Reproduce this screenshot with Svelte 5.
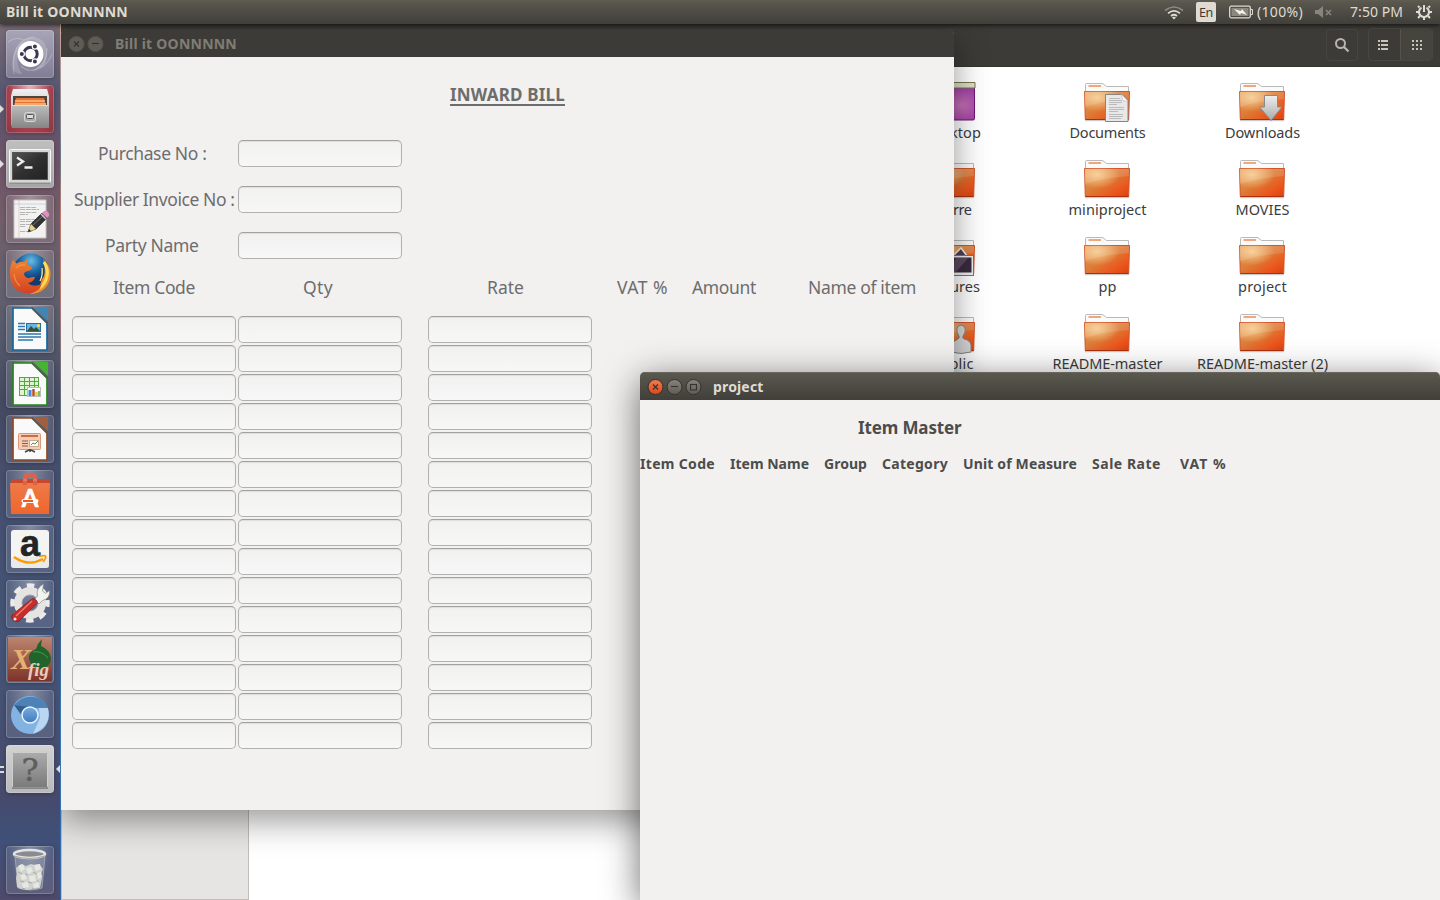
<script>
  // Tracks a label so that it occupies the given width.
  function fit(node, width) {
    const apply = () => {
      node.style.letterSpacing = '0px';
      const natural = node.getBoundingClientRect().width;
      const count = node.textContent.length;
      node.style.letterSpacing = `${(width - natural) / count}px`;
    };
    apply();
    document.fonts?.ready.then(apply);
  }

  const launchers = [
    'dash', 'files', 'terminal', 'editor', 'firefox', 'writer', 'calc', 'impress',
    'software', 'amazon', 'settings', 'xfig', 'chromium', 'unknown'
  ];
  const folders = [
    ['Desktop', 57, 'desktop'], ['Documents', 76, 'documents'], ['Downloads', 75, 'downloads'],
    ['Pierre', 38, ''], ['miniproject', 78, ''], ['MOVIES', 54, ''],
    ['Pictures', 55, 'pictures'], ['pp', 18, ''], ['project', 49, ''],
    ['Public', 42, 'public'], ['README-master', 110, ''], ['README-master (2)', 131, '']
  ];
  const fields = [['Purchase No :', 108.5], ['Supplier Invoice No :', 160.5], ['Party Name', 93.5]];
  const heads = [['Item Code', 82], ['Qty', 30], ['Rate', 37], ['VAT %', 51], ['Amount', 64], ['Name of item', 108]];
  const master = [['Item Code', 75], ['Item Name', 79], ['Group', 43], ['Category', 66], ['Unit of Measure', 114], ['Sale Rate', 69], ['VAT %', 46.5]];
  const rows = Array.from({ length: 15 });
</script>

{#snippet launcherIcon(kind)}
  <svg width="48" height="48" viewBox="0 0 48 48">
    {#if kind === 'dash'}
      <path d="M7 40C5 24 10 9 27 7Q42 8 41 27 39 41 25 41 33 38 38 30 40 14 27 10 12 12 11 28 11 36 16 44 10 44 7 40z" fill="#fff" fill-opacity=".17" />
      <path d="M8 44C5 24 12 8 28 7M15 36C25 46 41 38 41 18M2 12Q10 6 18 10M34 38Q42 34 46 24" fill="none" stroke="#fff" stroke-opacity=".22" stroke-width="1.200" />
      <circle cx="24.500" cy="24" r="13" fill="#fff" />
      <circle cx="24.500" cy="24" r="6.700" fill="none" stroke="#3c3750" stroke-width="3" />
      <g fill="#3c3750" stroke="#fff" stroke-width="1.200"><circle cx="15.800" cy="24" r="2.600" /><circle cx="28.900" cy="16.500" r="2.600" /><circle cx="28.900" cy="31.500" r="2.600" /></g>
    {:else if kind === 'files'}
      <path d="M7 4h34l2 7v28l-1 4H6l-1-4V11z" fill="url(#metal)" />
      <path d="M7 11h34v10H7z" fill="#4c443d" />
      <path d="M10 13h28l2 7H8z" fill="#e2713a" /><path d="M9 16h30M9 19h31" stroke="#f9c078" stroke-width="1.5" />
      <path d="M6 20h37v23H6z" fill="url(#drawer)" /><path d="M6 20.5h37" stroke="#ddd" />
      <rect x="18.5" y="27.5" width="11" height="9" rx="2" fill="#aaa" stroke="#d8d8d8" /><rect x="20.5" y="29.5" width="7" height="4" rx="1" fill="#ddd" stroke="#555" />
    {:else if kind === 'terminal'}
      <rect x="3.5" y="9.5" width="41" height="33" rx="1" fill="#d5d5d5" stroke="#f8f8f8" />
      <path d="M4 43h40" stroke="#777" stroke-width="1" />
      <rect x="6.5" y="12.5" width="35" height="27" fill="url(#screen)" stroke="#555" />
      <path d="M11 17.500l6 4-6 4M18.500 27.500h8" fill="none" stroke="#eee" stroke-width="2.300" />
    {:else if kind === 'editor'}
      <path d="M8 5h32v38H8z" fill="#f2f2f0" stroke="#c4c2c0" />
      <path d="M13 5v38" stroke="#e6b7b7" stroke-width=".6" /><path d="M8 9h32" stroke="#a7c3dc" stroke-width=".6" />
      <path d="M14 12.500h16M14 14.500h19M14 17.500h17M14 19.500h8M14 24.500h18M14 26.500h14M14 29.500h17M14 31.500h6M14 36.500h12" stroke="#b4b4b4" stroke-dasharray="5 .7" />
      <path d="M22 37l3-8 11-11 5 5-11 11z" fill="#333" stroke="#111" stroke-width=".6" /><path d="M27 30l11-10" stroke="#777" />
      <path d="M22 37l3-8 5 5z" fill="#e9d38a" /><path d="M22 37l1-3 2 2z" fill="#222" />
      <path d="M36 18l2-2q2-1 4 1t1 4l-2 2z" fill="#e58bc4" /><path d="M35 19l5 5" stroke="#ccc" stroke-width="1.5" />
    {:else if kind === 'firefox'}
      <circle cx="25" cy="22" r="18.500" fill="url(#ffblue)" />
      <path d="M37 9q8 7 7.500 16C44 37 35 44 24 44q10-5 12-15l2-3q2-9-1-17z" fill="#f0902c" />
      <path d="M38 12q5 8 2.500 16-1.500 6-7 10" fill="none" stroke="#fddd55" stroke-width="3" />
      <path d="M36 18q1 7-2 13" fill="none" stroke="#fff0a0" stroke-width="1.200" />
      <path d="M7 10l3.500 3.500q4-2.500 7.500-1.500 1-2 4-2.500-1.500 4 0 5.500 3 1 4 2.500-.5 2.500-4 3.500-4 1-4 3 1 4 5 4 3-1.500 6-1-1 5-7 6 5 5 14 1-3 8-12 9.500C11 44 4 35 4 25Q3.500 16 7 10z" fill="url(#fffox)" />
      <path d="M10 18q4-4 9-3M8 24q1 8 6 12" fill="none" stroke="#f6a04b" stroke-opacity=".7" stroke-width="1.300" />
    {:else if kind === 'writer' || kind === 'calc' || kind === 'impress'}
      {@const c = kind === 'writer' ? '#176799' : kind === 'calc' ? '#238519' : '#8d4a25'}
      {@const c2 = kind === 'writer' ? '#3e86b4' : kind === 'calc' ? '#43b52e' : '#a35f3b'}
      <path d="M7 3h19l15 15v27H7z" fill="#fafafa" stroke={c} stroke-width="1.700" />
      <path d="M28 2h14v14z" fill={c2} /><path d="M26 2.500L41.500 18" stroke="#555" stroke-opacity=".6" stroke-width="2.500" />
      {#if kind === 'writer'}
        <path d="M12 18.500h7M12 21.500h7M12 24.500h7M12 29h23M12 32h23M12 35h15" stroke="#2b7bad" stroke-width="1.4" />
        <rect x="20.500" y="18.500" width="14" height="8" fill="#68b5e4" stroke="#28719d" /><path d="M21 26l4-5 3 3 2-2 4 4z" fill="#34513d" /><circle cx="32.500" cy="20.500" r="1.500" fill="#f5e93f" />
      {:else if kind === 'calc'}
        <rect x="13.500" y="17.500" width="19" height="18" fill="#e0f4d4" stroke="#52a742" /><path d="M13 21.500h20M13 25.500h20M13 29.500h20M18.500 18v17M23.500 18v17M28.500 18v17" stroke="#52a742" />
        <rect x="21.500" y="27.500" width="13" height="9" fill="#fff" stroke="#bbb" /><path d="M24 30v6" stroke="#3c8bd9" stroke-width="3" /><path d="M27.500 29v7" stroke="#bd4d2a" stroke-width="2.500" /><path d="M30.500 32v4" stroke="#edc53c" stroke-width="2.500" /><path d="M33 31v5" stroke="#78c35d" stroke-width="2" />
      {:else}
        <rect x="12.500" y="18.500" width="22" height="16" rx="1" fill="#f5cdb4" stroke="#dd977a" /><path d="M15 21h17" stroke="#c66d49" stroke-width="2" />
        <path d="M16 26h6M16 28.500h6M16 31h6" stroke="#91583d" /><rect x="23.500" y="25.500" width="9" height="6" fill="#fff" stroke="#ccaa92" /><path d="M25 30l2-2 2 1 3-3" fill="none" stroke="#3f9e3c" />
        <path d="M19 37l4-2h2l4 2M24 34v3" fill="none" stroke="#444" stroke-width="1.500" />
      {/if}
    {:else if kind === 'software'}
      <path d="M5 10l2-1h34l2 1v6H5z" fill="#c7482e" /><path d="M4 13h40l-1 31H5z" fill="url(#bag)" />
      <path d="M19 15V8q0-3 3-3h4q3 0 3 3v7" fill="none" stroke="#d96449" stroke-width="4" /><path d="M17 10h4M27 10h4" stroke="#ed8d70" />
      <text x="24" y="37" text-anchor="middle" font-family="Lato, sans-serif" font-weight="700" font-size="24" fill="#fff" stroke="#fff" stroke-width=".6">A</text>
      <rect x="15.500" y="29" width="17" height="4" rx="2" fill="#fff" /><path d="M17 31h10" stroke="#ec5a22" stroke-width="2" />
    {:else if kind === 'amazon'}
      <rect x="5" y="5" width="38" height="38" rx="3" fill="#f4f4f3" /><rect x="5" y="32" width="38" height="11" rx="2" fill="#dfdfdf" fill-opacity=".5" />
      <text x="24" y="31" text-anchor="middle" font-family="Liberation Sans, sans-serif" font-weight="700" font-size="36" fill="#242424" stroke="#242424" stroke-width=".6">a</text>
      <path d="M8 32q14 10 29 2" fill="none" stroke="#ff9900" stroke-width="2.200" /><path d="M33 31.500q5-1.500 6.500-.500 1 2-2.500 6" fill="none" stroke="#ff9900" stroke-width="1.800" />
    {:else if kind === 'settings'}
      <circle cx="24" cy="23" r="17" fill="none" stroke="#ecebea" stroke-width="5.500" stroke-dasharray="7.300 6.050" stroke-dashoffset="3.600" />
      <circle cx="24" cy="23" r="12" fill="none" stroke="#e5e4e2" stroke-width="8" /><circle cx="24" cy="23" r="8" fill="none" stroke="#a2a2a4" />
      <path d="M28 20l3.500-4q-2-8 6-12l-1 7 3 2.500 4-3q1 8-7 10l-3.500 3.500z" fill="#f2f2ef" stroke="#888" stroke-width=".7" />
      <path d="M26.500 18.500q4 0 5 4.500L13 41q-3 2-6-1t0-6z" fill="#c92d2b" stroke="#701c1e" stroke-width=".7" /><path d="M10 36l16-15" stroke="#ec8176" stroke-width="1.300" /><circle cx="9" cy="39" r="1.500" fill="#eee" />
    {:else if kind === 'xfig'}
      <rect x="2" y="2" width="44" height="44" fill="url(#rust)" />
      <path d="M23 24q-1-7 7-10l2-5 4-5-1 7q9 4 10 12 0 9-10 11-10 0-12-10z" fill="#20642c" /><path d="M27 17q8-2 15 6" stroke="#4b9a4a" fill="none" />
      <text font-family="Liberation Serif, serif" font-style="italic" font-weight="700" fill="#e5b071"><tspan x="5" y="34" font-size="30">X</tspan><tspan x="22" y="41" font-size="19" fill="#efc8bd">fig</tspan></text>
    {:else if kind === 'chromium'}
      <circle cx="24" cy="25" r="19" fill="#82b3e3" /><path d="M8 15Q17 5 28 7q10 1 14 11H24z" fill="#4e82b7" /><path d="M42 18q4 18-15 26l7-16-1-10z" fill="#bbd6f0" /><path d="M8 15l11 15-2-9 7-4z" fill="#315e8c" />
      <circle cx="24" cy="25" r="8" fill="url(#chrome)" stroke="#e9f3fb" stroke-width="1.500" />
    {:else if kind === 'unknown'}
      <rect x="6.500" y="7.500" width="35" height="35" rx="1" fill="url(#grey)" stroke="#cfcfcf" /><path d="M6 43h36" stroke="#555" />
      <text x="24" y="36" text-anchor="middle" font-family="DejaVu Serif, serif" font-size="32" fill="#5e5e5e" stroke="#5e5e5e" stroke-width=".5">?</text>
    {:else}
      <path d="M9 10h30l-3 32q-12 4-24 0z" fill="#cdd2dc" fill-opacity=".25" stroke="#bcc1cc" stroke-opacity=".6" />
      <path d="M10 22l5-4 5 2 5-2 4 1 4-1 4 5-2 5 1 4-2 10-6 1-6 1-7-1-4-2-1-9 1-4z" fill="#d0d2ce" />
      <g fill="#e6e8e4"><path d="M12 20l5-2 2 5-4 3zM20 22l5-1 2 5-5 2zM28 19l6-1 1 5-5 2zM14 29l5-1 2 5-5 1zM23 30l6-1 1 6-6 1zM31 27l4-1 1 5-4 2zM16 37l6-1 1 5-6 1zM27 38l6-2v5l-5 1z" /></g>
      <path d="M12 26l4 2M19 28l3 1M27 26l4 2M14 35l4 1M22 36l4 1M31 34l2 2M16 42l3 1M26 42l2 1" stroke="#a8aaa9" />
      <ellipse cx="23.500" cy="8" rx="15.500" ry="4" fill="#888b92" stroke="#e3e3df" stroke-width="2.500" /><path d="M8 10q15 5 31 0" fill="none" stroke="#a4a49f" />
    {/if}
  </svg>
{/snippet}

{#snippet circle(kind, tone)}
  <svg class="wbtn" width="19" height="18" viewBox="0 0 19 18">
    <circle cx="9.500" cy="9" r="7.500" fill={tone === 'hot' ? 'url(#hot)' : tone === 'on' ? 'url(#cool)' : '#5e5c55'} stroke={tone === 'off' ? '#55534d' : '#34322e'} />
    <g fill="none" stroke="#34332f" stroke-width="1.100">
      {#if kind === 'close'}<path d="M7 6.500l5 5M12 6.500l-5 5" />{:else if kind === 'min'}<path d="M6 8.500h7" />{:else}<rect x="6.500" y="6.500" width="6" height="5.500" />{/if}
    </g>
  </svg>
{/snippet}

<svg class="defs" width="0" height="0">
  <defs>
    <linearGradient id="metal" x2="0" y2="1"><stop stop-color="#f2f2f2" /><stop offset="1" stop-color="#999" /></linearGradient>
    <linearGradient id="drawer" x2="0" y2="1"><stop stop-color="#bdbdbd" /><stop offset="1" stop-color="#858585" /></linearGradient>
    <linearGradient id="screen" x2="1" y2="1"><stop stop-color="#555" /><stop offset=".5" stop-color="#303030" /><stop offset="1" stop-color="#222" /></linearGradient>
    <radialGradient id="ffblue" cx=".5" cy=".2"><stop stop-color="#69bee4" /><stop offset=".6" stop-color="#1d65a4" /><stop offset="1" stop-color="#133b72" /></radialGradient>
    <linearGradient id="fffox" x2="0" y2="1"><stop stop-color="#ee8433" /><stop offset="1" stop-color="#d44122" /></linearGradient>
    <linearGradient id="bag" x2="0" y2="1"><stop stop-color="#ee7a48" /><stop offset="1" stop-color="#f0662c" /></linearGradient>
    <linearGradient id="rust" x2="0" y2="1"><stop stop-color="#bd8670" /><stop offset="1" stop-color="#7d3329" /></linearGradient>
    <linearGradient id="chrome" x2="0" y2="1"><stop stop-color="#7aaee1" /><stop offset="1" stop-color="#3f79bd" /></linearGradient>
    <linearGradient id="grey" x2="0" y2="1"><stop stop-color="#ababab" /><stop offset="1" stop-color="#7a7a7a" /></linearGradient>
    <linearGradient id="hot" x2="0" y2="1"><stop stop-color="#f37b57" /><stop offset="1" stop-color="#dd4814" /></linearGradient>
    <linearGradient id="cool" x2="0" y2="1"><stop stop-color="#85837b" /><stop offset="1" stop-color="#5e5c55" /></linearGradient>
    <linearGradient id="body" x2="1" y2="1"><stop stop-color="#e89e57" /><stop offset=".45" stop-color="#dc7d38" /><stop offset=".8" stop-color="#ec521a" /><stop offset="1" stop-color="#d4430f" /></linearGradient>
    <radialGradient id="shine" cx=".28" cy=".22" r=".5"><stop stop-color="#fbd9a0" stop-opacity=".8" /><stop offset="1" stop-color="#fbd9a0" stop-opacity="0" /></radialGradient>
    <radialGradient id="violet" cx=".7" cy=".6"><stop stop-color="#c873b8" /><stop offset="1" stop-color="#a03fa5" /></radialGradient>
    <linearGradient id="arrow" x2="0" y2="1"><stop stop-color="#eee" /><stop offset="1" stop-color="#aaa" /></linearGradient>
  </defs>
</svg>

<div class="desktop">
  <header class="panel">
    <b class="app" use:fit={122}>Bill it OONNNNN</b>
    <div class="tray">
      <svg class="wifi" width="20" height="16" viewBox="0 0 20 16"><path d="M1 6.500Q10-.5 19 6.500" fill="none" stroke="#8d8a82" stroke-width="1.600" /><path d="M4 9.300q6-5 12 0M7 12q3-2.500 6 0" fill="none" stroke="#dfdbd2" stroke-width="1.700" /><path d="M8 13.500l2 2 2-2q-2-1.500-4 0z" fill="#dfdbd2" /></svg>
      <span class="lang"><span use:fit={14}>En</span></span>
      <svg class="battery" width="24" height="14" viewBox="0 0 24 14"><rect x=".7" y="1.200" width="20.600" height="11.600" rx="1.500" fill="none" stroke="#dfdbd2" stroke-width="1.300" /><rect x="2.500" y="3" width="17" height="8" fill="#8b8880" /><path d="M22 4.500h1.500v5H22" fill="none" stroke="#dfdbd2" /><path d="M5 4l7 2 1-2 5 6-6-2-1 2z" fill="#f5f2e9" /></svg>
      <span class="pct" use:fit={46}>(100%)</span>
      <svg class="mute" width="18" height="14" viewBox="0 0 18 14"><path d="M0 5h3l5-4v12L3 9H0z" fill="#88857d" /><path d="M11 5l5 5M16 5l-5 5" stroke="#88857d" stroke-width="1.600" /></svg>
      <span class="time" use:fit={53}>7:50 PM</span>
      <svg class="gear" width="16" height="16" viewBox="0 0 16 16"><path d="M5.500 3.700a5 5 0 1 0 5 0" fill="none" stroke="#dfdbd2" stroke-width="2" /><path d="M8 1v7M3.500 3.500L2 2M12.500 3.500L14 2M3 8H0M13 8h3M4 12l-2 2M12 12l2 2M8 13v3" stroke="#dfdbd2" stroke-width="2" /></svg>
    </div>
  </header>

  <nav class="launcher">
    {#each launchers as kind}
      <div class="tile {kind}">
        {@render launcherIcon(kind)}
        {#if kind === 'files' || kind === 'terminal'}<i class="pip"></i>{/if}
        {#if kind === 'unknown'}<i class="pips"></i><i class="active"></i>{/if}
      </div>
    {/each}
    <div class="tile trash">{@render launcherIcon('trash')}</div>
  </nav>

  <section class="window browser">
    <div class="toolbar">
      <span class="tool"><svg width="16" height="16" viewBox="0 0 16 16"><circle cx="6.500" cy="6.500" r="4.500" fill="none" stroke="#b8b5a9" stroke-width="2" /><path d="M9.500 9.500l5 5" stroke="#b8b5a9" stroke-width="2.300" /></svg></span>
      <div class="pair">
        <span class="seg"><svg width="12" height="12" viewBox="0 0 12 12"><path d="M1 2h2M4 2h7M1 6h2M4 6h7M1 10h2M4 10h7" stroke="#c6c3b7" stroke-width="2" /></svg></span>
        <span class="seg on"><svg width="12" height="12" viewBox="0 0 12 12"><path d="M1 2h2M5 2h2M9 2h2M1 6h2M5 6h2M9 6h2M1 10h2M5 10h2M9 10h2" stroke="#c6c3b7" stroke-width="2" /></svg></span>
      </div>
    </div>
    <div class="pane">
      <aside></aside>
      <div class="files">
        {#each folders as [name, width, kind]}
          <div class="file">
            <svg width="48" height="48" viewBox="0 0 48 48">
              {#if kind === 'desktop'}
                <rect x="1.500" y="5" width="45" height="37" rx="1.500" fill="url(#violet)" stroke="#6f1675" /><path d="M1 4.500h46v5.500H1z" fill="#dedcca" stroke="#77774a" />
              {:else}
                <path d="M2.500 13V6.500q0-1 1-1H19q1 0 2 1l2.500 2H45.500V13" fill="#fafafa" stroke="#b9b9b9" /><path d="M5.500 8H18" stroke="#f0a77d" stroke-width="2" />
                <path d="M2 42.500h44" stroke="#000" stroke-opacity=".2" stroke-width="1.500" />
                <path d="M1.500 13.500h45l-.8 28H2.300z" fill="url(#body)" stroke="#cf542b" /><path d="M1.500 13.500h45l-.8 28H2.300z" fill="url(#shine)" />
                <path d="M2 14h44v7Q20 23 2 29z" fill="#fff" fill-opacity=".13" /><path d="M2.500 41.500h43" stroke="#a9300d" />
              {/if}
              {#if kind === 'documents'}
                <path d="M22.500 16.500H39l6 6v21H22.500z" fill="#e8e8e8" stroke="#858585" /><path d="M38 16l7 7h-5z" fill="#fafafa" stroke="#aaa" stroke-width=".5" /><path d="M26 20.500h11M26 22.500h13M26 24.500h13M26 26.500h8M26 29.500h15M26 31.500h15M26 33.500h9M26 36.500h14M26 38.500h14M26 40.500h12" stroke="#bbb" />
              {:else if kind === 'downloads'}
                <path d="M26.500 17.500h13V29h4.500L33 42.500 21.500 29h5z" fill="url(#arrow)" stroke="#8a8a8a" />
              {:else if kind === 'pictures'}
                <path d="M22 27l11-11 9 12z" fill="#4e4050" stroke="#eee" stroke-width="1.500" /><rect x="18" y="23.500" width="27.500" height="20" fill="#eee" stroke="#777" /><rect x="19.500" y="25.500" width="24" height="15" fill="#3a2b40" /><path d="M20 40l8-14h12L28 40z" fill="#8f7a8e" fill-opacity=".4" />
              {:else if kind === 'public'}
                <path d="M23 43v-7q2-4 7-6 2-1 1-3-3-4-2-8 4-6 8 0 1 4-2 8-1 2 1 3 6 1 7 6v7q-10 3-20 0z" fill="#d9d9d9" stroke="#888" />
              {/if}
            </svg>
            <span use:fit={width}>{name}</span>
          </div>
        {/each}
      </div>
    </div>
  </section>

  <section class="window bill">
    <div class="title">{@render circle('close', 'off')}{@render circle('min', 'off')}<b use:fit={122}>Bill it OONNNNN</b></div>
    <div class="form">
      <h1><span use:fit={115}>INWARD BILL</span></h1>
      <div class="fields">
        {#each fields as [label, width]}
          <label><span use:fit={width}>{label}</span><input /></label>
        {/each}
      </div>
      <div class="heads">
        {#each heads as [label, width]}<div><span use:fit={width}>{label}</span></div>{/each}
      </div>
      <div class="entries">
        {#each rows as _}<input /><input /><input />{/each}
      </div>
    </div>
  </section>

  <section class="window item">
    <div class="title">{@render circle('close', 'hot')}{@render circle('min', 'on')}{@render circle('max', 'on')}<b use:fit={50.5}>project</b></div>
    <h2><span use:fit={103.5}>Item Master</span></h2>
    <div class="columns">
      {#each master as [label, width]}<div><span use:fit={width}>{label}</span></div>{/each}
    </div>
  </section>
</div>

<style>
  :global(body) { margin: 0; overflow: hidden; }
  .desktop { position: relative; width: 1440px; height: 900px; overflow: hidden; background: #fff; font-family: "Noto Sans", "Open Sans", sans-serif; font-size: 14.500px; color: #3c3c3c; }
  .desktop * { box-sizing: border-box; }
  span, b { white-space: nowrap; }
  svg { display: block; flex: none; }
  .defs { position: absolute; }

  .panel { position: relative; z-index: 5; display: flex; align-items: center; justify-content: space-between; height: 24px; padding: 0 8px 0 6px; background: linear-gradient(#5f5d52, #57554c 15%, #403f3a); color: #dfdbd2; box-shadow: 0 1px 5px rgba(0, 0, 0, .75); }
  .panel .app { font-size: 14px; line-height: 24px; }
  .tray { display: flex; align-items: center; font-size: 14px; line-height: 22px; }
  .wifi { margin-right: 12px; }
  .lang { display: flex; align-items: center; justify-content: center; width: 20px; height: 20px; margin-right: 13px; padding-top: 1px; border-radius: 2px; background: #dfdbd2; color: #3c3b37; font-size: 12.500px; }
  .battery { margin-right: 4px; }
  .pct { margin-right: 12px; }
  .mute { margin-right: 17px; }
  .time { margin-right: 13px; }

  .launcher { position: relative; z-index: 4; display: flex; flex-direction: column; gap: 7px; width: 61px; height: 876px; padding: 6px 0 6px 6px; border-right: 1px solid #8f7478; border-image: linear-gradient(#d0a89b, #697a89 15%, #b97c70 22%, #b67b72 30%, #5d6c7b 43%, #375477 60%, #3978b3 80%, #3467a8) 1; background: linear-gradient(#7b6c76, #555670 8%, #6d5368 15%, #735d69 22%, #65606f 30%, #54596c 36%, #454a62 43%, #455071 55%, #445477 72%, #465072 80%, #474a6c 88%, #3f5078 93%, #4e4b6c); }
  .tile { position: relative; width: 48px; height: 48px; border-radius: 4px; background: radial-gradient(ellipse at 50% 0, rgba(255, 255, 255, .34), rgba(255, 255, 255, .1) 65%); box-shadow: inset 0 0 0 1px rgba(255, 255, 255, .2), 0 1px 4px rgba(0, 0, 0, .25); }
  .dash { background: linear-gradient(#a9a5b8, #827d96); }
  .files.tile { background: radial-gradient(ellipse at 50% 0, #e4b5bd, #a7424f 60%, #8b3541); }
  .terminal { background: linear-gradient(#bfbfbf, #a5a5a5); }
  .unknown { background: linear-gradient(#d2d2d2, #b9b9bd); }
  .trash { margin-top: auto; }
  .pip { position: absolute; left: -6px; top: 20px; border: 4px solid transparent; border-left-color: #dedede; border-right: 0; }
  .pips { position: absolute; left: -6px; top: 21px; width: 4px; height: 7px; border: solid #d9d9d9; border-width: 2px 0; }
  .active { position: absolute; left: 50px; top: 20px; border: 4px solid transparent; border-right-color: #dedede; border-left: 0; }

  .window { position: absolute; }
  .browser { left: 61px; top: 24px; width: 1379px; height: 876px; display: flex; flex-direction: column; background: #fff; }
  .toolbar { display: flex; justify-content: flex-end; align-items: center; gap: 10px; height: 43px; padding: 0 7px 1px 0; background: #3c3b37; border-bottom: 1px solid #34332e; }
  .tool { display: flex; align-items: center; justify-content: center; width: 32px; height: 32px; border: 1px solid #46453f; border-radius: 4px; }
  .pair { display: grid; grid-template-columns: 31px 32px; height: 33px; width: 65px; border: 1px solid #484740; border-radius: 4px; overflow: hidden; }
  .seg { display: flex; align-items: center; justify-content: center; padding-right: 3px; }
  .on { background: #45443e; border-left: 1px solid #55534b; padding-right: 0; }
  .pane { flex: 1; display: flex; min-height: 0; }
  aside { width: 188px; background: #e6e5e3; border: 1px solid #c1bdb8; border-top: 0; flex: none; }
  .files:not(.tile) { display: grid; grid-template-columns: repeat(3, 155px); grid-auto-rows: 77px; margin-left: 625px; padding-top: 11px; align-content: start; }
  .file { display: flex; flex-direction: column; align-items: center; color: #3c3c3c; }
  .file span { line-height: 16px; margin: -2px 0 0 2px; }

  .bill { left: 61px; top: 29px; width: 893px; height: 781px; z-index: 2; background: #f2f1f0; border-radius: 6px 6px 0 0; box-shadow: 0 10px 34px rgba(0, 0, 0, .42); color: #6d6d6d; }
  .title { display: flex; align-items: center; height: 28px; padding: 1px 0 0 6px; border-radius: 5px 5px 0 0; background: #3c3b37; color: #807d76; font-size: 14px; }
  .title b { margin-left: 10px; line-height: 20px; }
  .form { font-size: 17.500px; }
  h1 { display: flex; margin: 0; padding: 26px 0 0 389px; height: 83px; font-size: 17px; line-height: 23px; }
  h1 span { height: 22px; text-decoration: underline; text-decoration-thickness: 1.500px; text-underline-offset: 2.500px; }
  .fields { display: flex; flex-direction: column; gap: 19px; }
  label { display: grid; grid-template-columns: 166px 164px; align-items: center; height: 27px; padding-left: 11px; }
  label span { justify-self: start; margin-left: 26px; margin-top: -2px; line-height: 24px; }
  label:nth-child(2) span { margin-left: 2px; }
  label:nth-child(3) span { margin-left: 33px; }
  input { display: block; width: 164px; height: 27px; margin: 0; padding: 0 6px; border: 1px solid #b3b1af; border-top-color: #a3a19f; border-radius: 5px; outline: 0; background: linear-gradient(#f1f1f0, #f7f7f7); box-shadow: inset 0 1px 1px rgba(0, 0, 0, .08); }
  .heads { display: grid; grid-template-columns: 190px 184px 130px 75px 116px auto; height: 24px; margin-top: 16px; padding-left: 52px; line-height: 24px; }
  .entries { display: grid; grid-template-columns: 166px 190px 164px; grid-auto-rows: 27px; row-gap: 2px; padding: 17px 0 0 11px; }

  .item { left: 640px; top: 372px; width: 800px; height: 528px; z-index: 3; background: #f2f1f0; border-radius: 6px 6px 0 0; box-shadow: 0 8px 36px rgba(0, 0, 0, .58); color: #4c4c4c; }
  .item .title { background: linear-gradient(#5b594f, #403f3a); box-shadow: inset 0 1px #69675d; color: #dfdbd2; }
  h2 { display: flex; margin: 0; padding: 16px 0 0 218px; font-size: 17px; line-height: 23px; }
  .columns { display: grid; grid-template-columns: 90px 94px 58px 81px 129px 88px auto; padding-top: 15px; line-height: 20px; font-size: 14px; font-weight: 700; }
</style>
